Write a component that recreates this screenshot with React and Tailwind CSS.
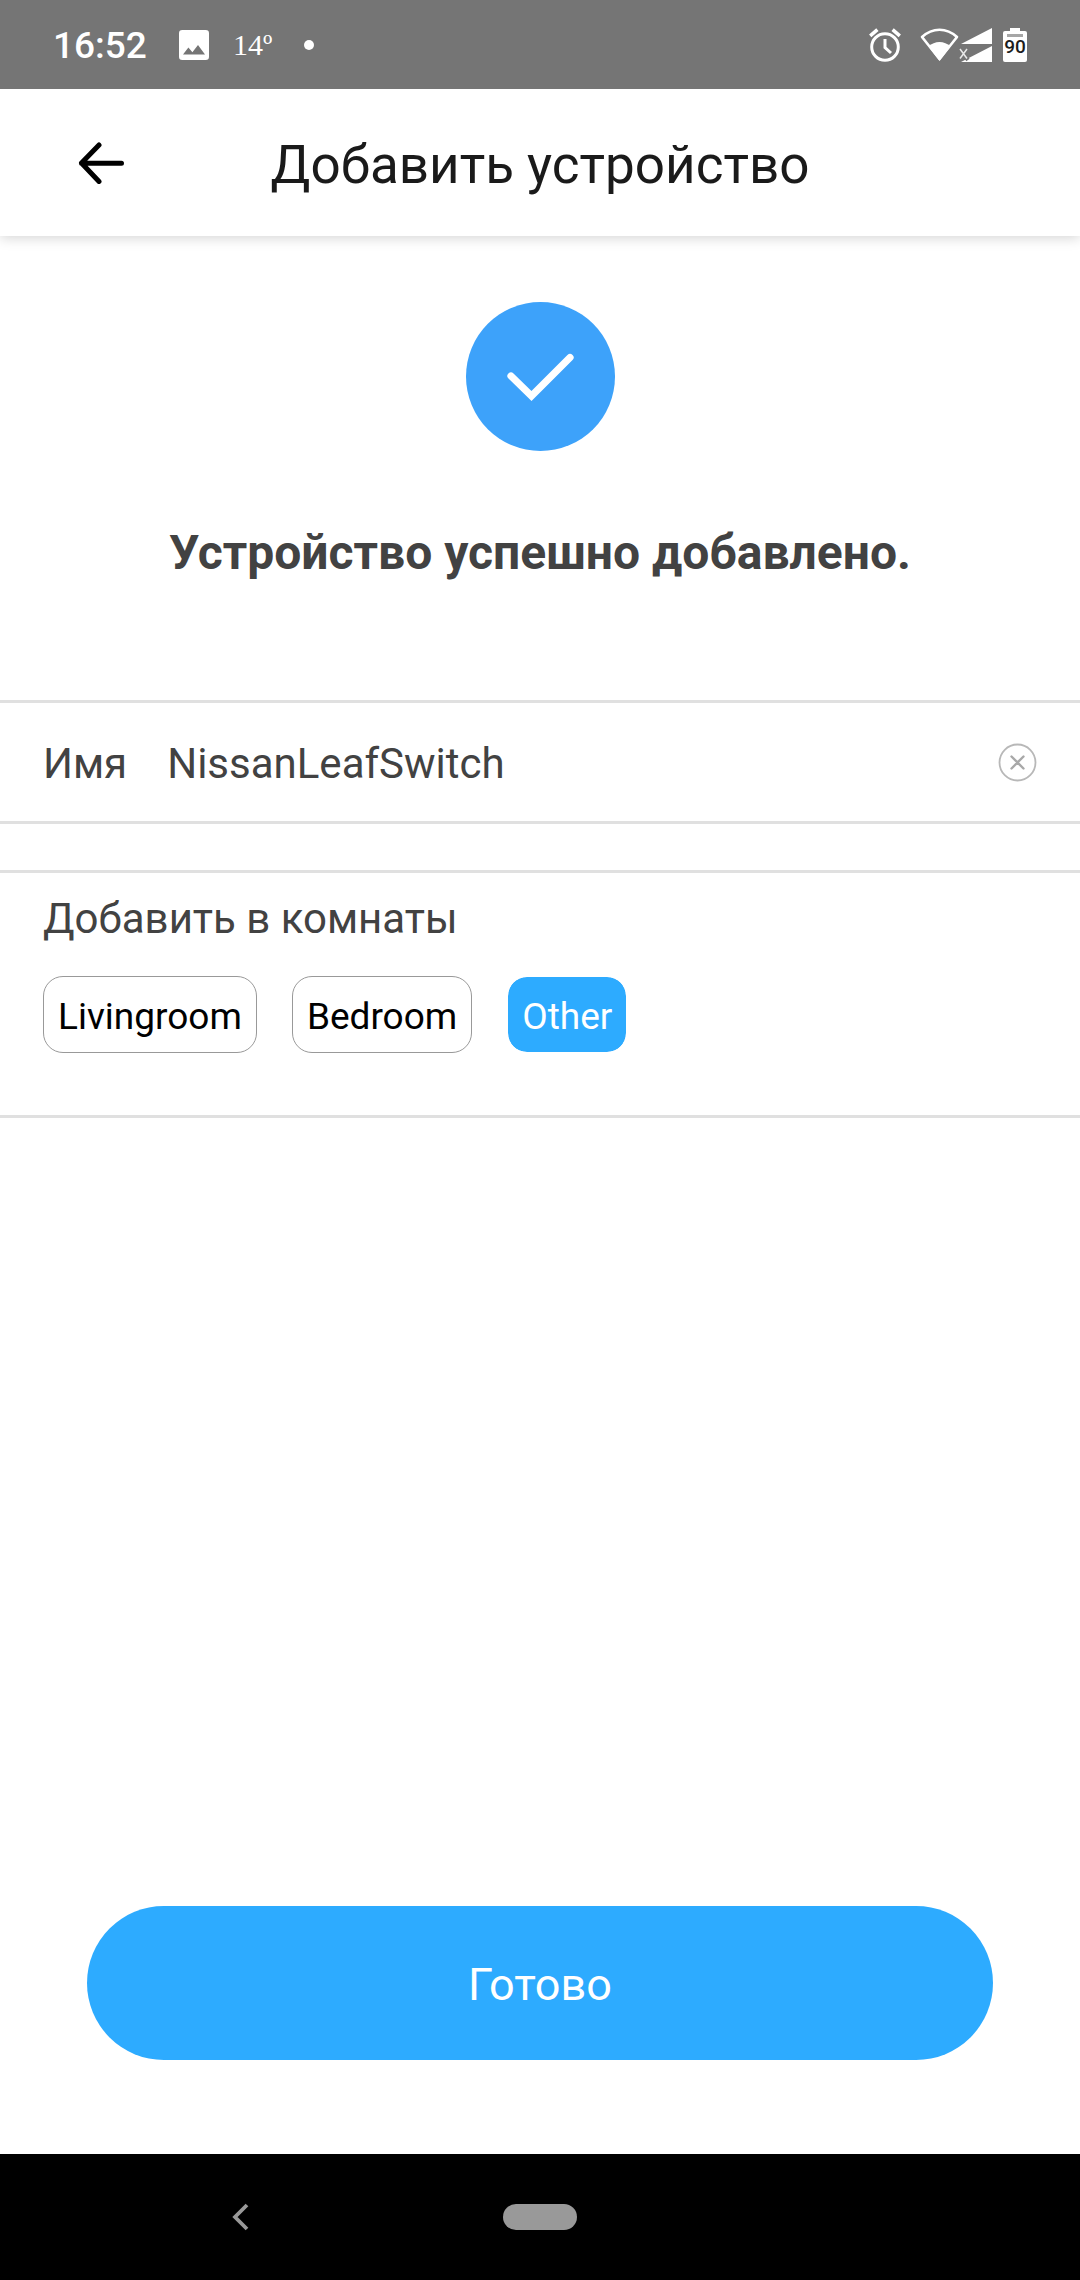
import { useState } from 'react';

const ROOMS = ['Livingroom', 'Bedroom', 'Other'];

function StatusBar() {
  return (
    <div className="relative z-10 flex h-[89px] shrink-0 items-center justify-between bg-[#757575] pr-[53px] pl-[53px] text-white">
      <div className="flex items-center">
        <span className="pt-0.5 text-[37px] leading-[44px] font-medium">16:52</span>
        <svg className="ml-8 size-[30px]" viewBox="0 0 30 30" aria-hidden="true">
          <path
            fill="currentColor"
            fillRule="evenodd"
            d="M3.300 0h23.400A3.300 3.300 0 0 1 30 3.300v23.400a3.300 3.300 0 0 1-3.300 3.300H3.300A3.300 3.300 0 0 1 0 26.700V3.300A3.300 3.300 0 0 1 3.300 0ZM4 24.600h22L19 15l-5.600 7.200-4-4.800Z"
          />
        </svg>
        <span className="ml-6 font-['Liberation_Serif',serif] text-[30px] leading-[44px]">14º</span>
        <span className="ml-8 size-[10px] rounded-full bg-white" />
      </div>
      <div className="flex items-center">
        <svg className="h-[34px] w-8" viewBox="0 0 32 34" fill="none" stroke="currentColor" aria-hidden="true">
          <circle cx="16" cy="19" r="13.300" strokeWidth="3" />
          <path strokeWidth="3.500" d="M1.200 7.800 8.400 1.600M30.800 7.800 23.600 1.600" />
          <path strokeWidth="3" d="M16 11v8.500l6 5.500" />
        </svg>
        <svg className="ml-[19px] h-[34px] w-[39px]" viewBox="0 0 39 34" aria-hidden="true">
          <path
            fill="none"
            stroke="currentColor"
            strokeWidth="2.600"
            strokeLinejoin="round"
            d="M19.500 31 2 9C12.500-.7 26.500-.7 37 9Z"
          />
          <path fill="currentColor" d="M19.500 33 8.500 18.500c6-6 16-6 22 0Z" />
        </svg>
        <svg className="h-[34px] w-[33px]" viewBox="0 0 33 34" aria-hidden="true">
          <path fill="currentColor" d="M2 16 33 0v16ZM2 34l31-16v16Z" />
          <path stroke="#757575" strokeWidth="4" d="M0 20l9 12M9 20 0 32" />
          <path stroke="#e8e8e8" strokeWidth="1.500" d="M1 21l7 9.500M8 21 1 30.500" />
        </svg>
        <div className="ml-[11px] flex w-6 flex-col items-center">
          <span className="h-[3px] w-[10px] bg-white" />
          <span className="flex h-[31px] w-6 flex-col items-center rounded-[2px] bg-white pt-[3px]">
            <span className="h-[3px] w-4 bg-[#a6a6a6]" />
            <span className="text-[19px] leading-[19px] font-medium text-[#1c1c1c]">90</span>
          </span>
        </div>
      </div>
    </div>
  );
}

function Header() {
  return (
    <header className="grid h-[147px] shrink-0 grid-cols-[200px_1fr_200px] items-center bg-white shadow-[0_2px_12px_rgba(0,0,0,0.17)]">
      <button type="button" aria-label="Назад" className="ml-[77px] w-[48px]">
        <svg
          className="h-[42px] w-12"
          viewBox="0 0 48 42"
          fill="none"
          stroke="#000"
          strokeWidth="5"
          strokeLinecap="round"
          strokeLinejoin="round"
          aria-hidden="true"
        >
          <path d="M22 3 4.500 21 22 39.500M4.500 21.200H44.500" />
        </svg>
      </button>
      <h1 className="pt-1 text-center text-[53px] leading-[60px] text-[#1a1a1a]">Добавить устройство</h1>
    </header>
  );
}

function NameField() {
  const [name, setName] = useState('NissanLeafSwitch');
  return (
    <div className="flex h-[124px] items-center border-y-3 border-[#e0e0e0] px-[43px] text-[42px] leading-[50px] text-[#424242]">
      <label htmlFor="device-name" className="pt-1">Имя</label>
      <input
        id="device-name"
        type="text"
        value={name}
        onChange={(e) => setName(e.target.value)}
        className="ml-10 min-w-0 flex-1 bg-transparent pt-1 outline-none"
      />
      <button type="button" aria-label="Очистить" onClick={() => setName('')}>
        <svg className="size-[39px]" viewBox="0 0 39 39" fill="none" stroke="#b8b8b8" aria-hidden="true">
          <circle cx="19.500" cy="19.500" r="18" strokeWidth="1.800" />
          <path stroke="#a8a8a8" strokeWidth="2.400" strokeLinecap="round" d="m13.500 13.500 12 12m0-12-12 12" />
        </svg>
      </button>
    </div>
  );
}

function RoomPicker() {
  const [selected, setSelected] = useState('Other');
  return (
    <section className="mt-[46px] h-[248px] border-y-3 border-[#e0e0e0] px-[43px] pt-[21px]">
      <h3 className="text-[42px] leading-[50px] text-[#424242]">Добавить в комнаты</h3>
      <div className="mt-8 flex gap-[35px]">
        {ROOMS.map((room) => (
          <button
            key={room}
            type="button"
            aria-pressed={room === selected}
            onClick={() => setSelected(room)}
            className={
              room === selected
                ? 'h-[77px] rounded-[20px] border border-white bg-[#2dabff] bg-clip-padding px-[14px] pt-1 text-[37px] leading-[44px] text-white'
                : 'h-[77px] rounded-[20px] border border-[#999] px-[14px] pt-1 text-[37px] leading-[44px] text-black'
            }
          >
            {room}
          </button>
        ))}
      </div>
    </section>
  );
}

function NavigationBar() {
  return (
    <nav className="grid h-[126px] shrink-0 grid-cols-[1fr_auto_1fr] items-center bg-black">
      <button type="button" aria-label="Назад" className="ml-[230px] w-5">
        <svg className="h-[30px] w-5" viewBox="0 0 20 30" fill="none" stroke="#999" strokeWidth="3.800" aria-hidden="true">
          <path d="M17 3 5 15l12 12" />
        </svg>
      </button>
      <button type="button" aria-label="Домой" className="h-[26px] w-[74px] rounded-full bg-[#999]" />
    </nav>
  );
}

export default function App() {
  return (
    <div className="flex min-h-screen flex-col bg-white font-[Roboto,sans-serif]">
      <StatusBar />
      <Header />
      <main className="flex flex-1 flex-col pt-[66px]">
        <svg className="size-[149px] self-center" viewBox="0 0 149 149" role="img" aria-label="Готово">
          <circle cx="74.500" cy="74.500" r="74.500" fill="#3da2fa" />
          <path
            d="M45 74 65.500 94 104 55.500"
            fill="none"
            stroke="#fff"
            strokeWidth="7.200"
            strokeLinecap="round"
          />
        </svg>
        <h2 className="mt-[74px] mb-[119px] text-center text-[48px] leading-[56px] font-bold text-[#424242]">
          Устройство успешно добавлено.
        </h2>
        <NameField />
        <RoomPicker />
        <button
          type="button"
          className="mx-[87px] mt-auto mb-[94px] h-[154px] rounded-full bg-[#2dabff] pt-1 text-[45px] leading-[52px] text-white"
        >
          Готово
        </button>
      </main>
      <NavigationBar />
    </div>
  );
}
